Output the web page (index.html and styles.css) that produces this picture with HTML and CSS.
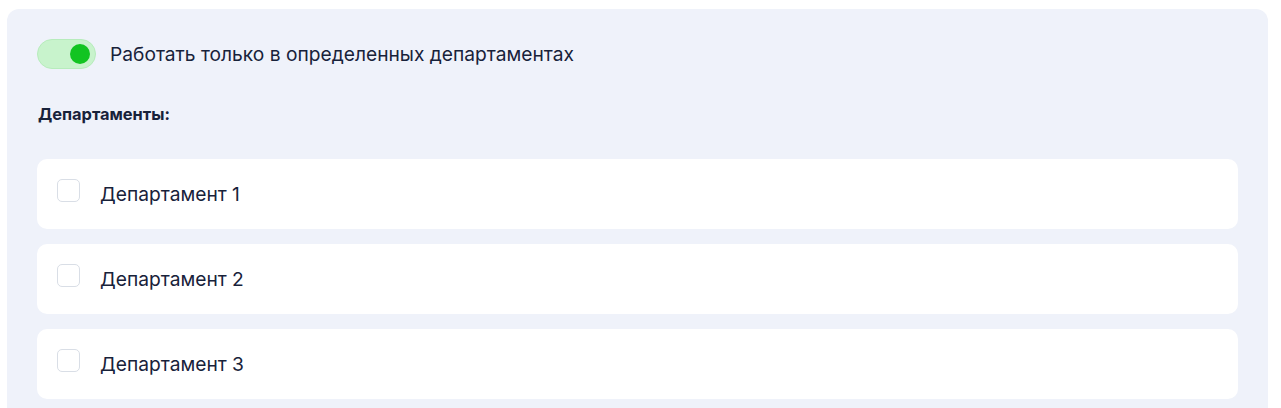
FILE: index.html
```html
<!DOCTYPE html>
<html lang="ru">
<head>
<meta charset="utf-8">
<link rel="stylesheet" href="styles.css">
</head>
<body>
<div class="panel">
  <label class="switch-row">
    <span class="switch"><span class="knob"></span></span>
    <span class="switch-label">Работать только в определенных департаментах</span>
  </label>
  <div class="section-title">Департаменты:</div>
  <div class="list">
    <label class="item"><span class="check"></span><span class="item-text">Департамент 1</span></label>
    <label class="item"><span class="check"></span><span class="item-text">Департамент 2</span></label>
    <label class="item"><span class="check"></span><span class="item-text">Департамент 3</span></label>
  </div>
</div>
</body>
</html>
```
FILE: styles.css
```css
html, body {
  margin: 0;
  padding: 0;
  background: #ffffff;
}
body {
  padding: 9px 13px 0 7px;
  font-family: Inter, "Noto Sans", sans-serif;
  color: #18223a;
}
.panel {
  background: #eff2fa;
  border-radius: 12px 12px 0 0;
  padding: 30px 30px 20px 30px;
}
.switch-row {
  display: flex;
  align-items: center;
  gap: 14px;
  height: 30px;
}
.switch {
  height: 28px;
  border-radius: 15px;
  background: #c8f3cc;
  border: 1px solid #b7ecbc;
  display: flex;
  align-items: center;
  justify-content: flex-end;
  padding: 0 5px 0 4px;
  box-sizing: content-box;
  width: 48px;
}
.knob {
  width: 20px;
  height: 20px;
  border-radius: 50%;
  background: #12c422;
}
.switch-label {
  font-size: 19.2px;
  line-height: 22px;
}
.section-title {
  margin-top: 35px;
  font-size: 16.4px;
  font-weight: 700;
  line-height: 20px;
  padding-left: 1px;
}
.list {
  margin-top: 35px;
  display: flex;
  flex-direction: column;
  gap: 15px;
}
.item {
  background: #ffffff;
  border-radius: 10px;
  height: 70px;
  display: flex;
  align-items: center;
  padding-left: 20px;
  gap: 20px;
}
.check {
  width: 21px;
  height: 21px;
  border: 1px solid #d9dee6;
  border-radius: 5px;
  background: #fff;
  margin-top: -8px;
}
.item-text {
  font-size: 19.2px;
  line-height: 22px;
}
```
